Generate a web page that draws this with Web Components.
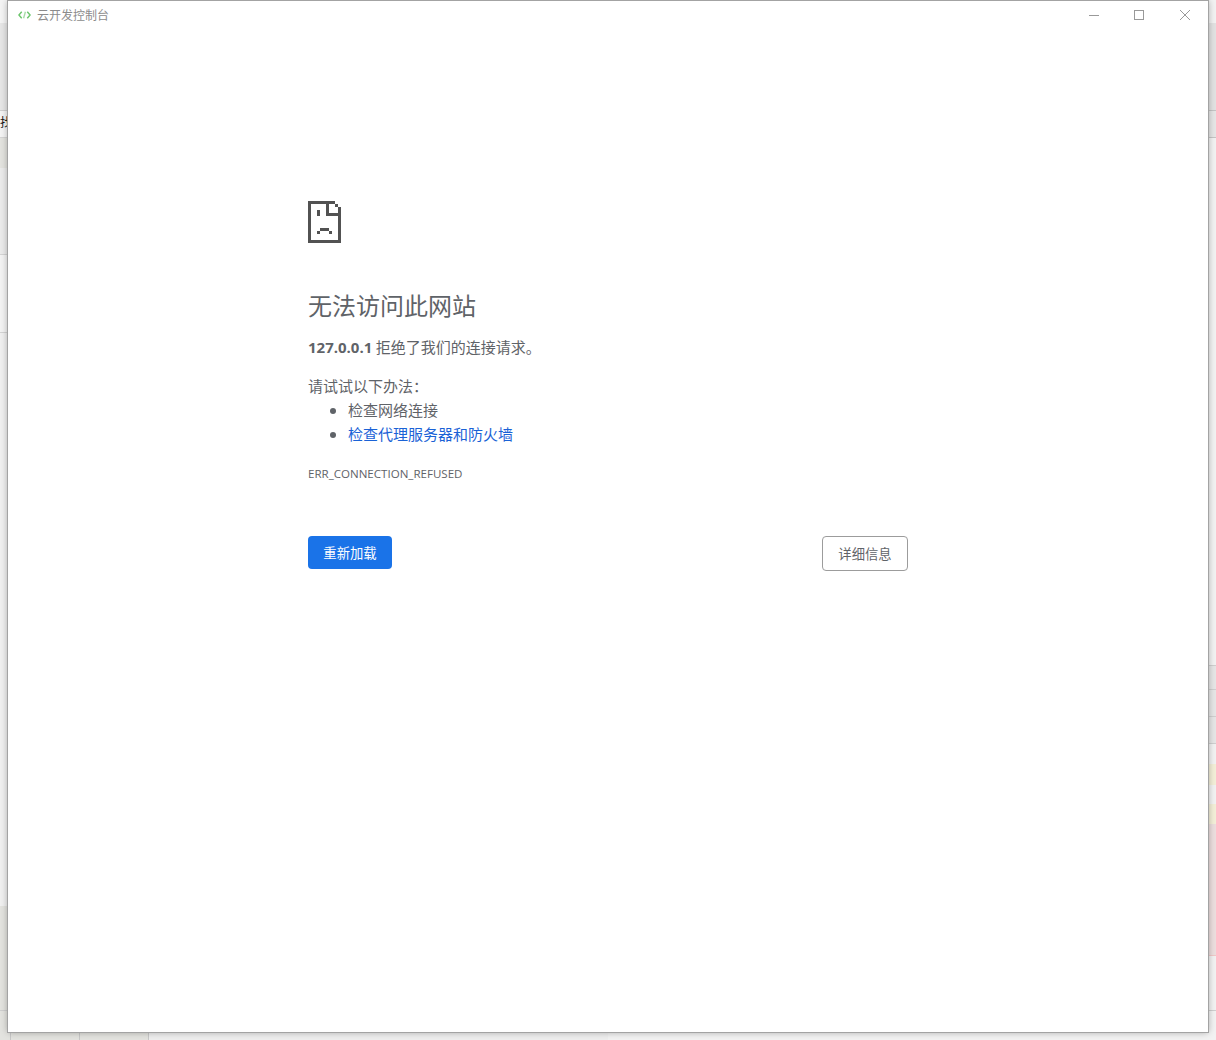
<!DOCTYPE html>
<html lang="zh-CN">
<head>
<meta charset="utf-8">
<title>云开发控制台</title>
<style>
html, body { margin: 0; height: 100%; overflow: hidden; background: #f2f2f2; }
body { font-family: "Noto Sans CJK SC", "Noto Sans", sans-serif; color: #5f6368; }
</style>
</head>
<body>
<desk-backdrop></desk-backdrop>
<app-window heading="云开发控制台">
    <error-page>
        <span slot="host">127.0.0.1</span>
        <span slot="reason">拒绝了我们的连接请求。</span>
        <span slot="code">ERR_CONNECTION_REFUSED</span>
    </error-page>
</app-window>
<script>
// the app behind the window, only its edges show
customElements.define("desk-backdrop", class extends HTMLElement {
    connectedCallback() {
        let row = ([height, color, line, text]) =>
            `<div class="row" style="height:${height}px;background:${color};${line ? "border-bottom:1px solid " + line : ""}">${text || ""}</div>`;
        let left = [
            [23, "#f4f4f4"],
            [87, "#e6e6e6", "#cfcfcf"],
            [26, "#f4f4f4", "#d4d4d4", `<span class="clip">找</span>`],
            [30, "#e3e3df"],
            [86, "#ebebeb", "#d4d4d4"],
            [77, "#f3f3f3", "#d4d4d4"],
            [573, "#f0f0f0"],
            [104, "#e3e3df", "#cfcfcf"]
        ];
        let right = [
            [23, "#f2f2f2"],
            [87, "#e2e2e2", "#c4c4c4"],
            [26, "#e6e6e6", "#c4c4c4"],
            [527, "#f2f2f2", "#cfcfcf"],
            [23, "#e6e6e6", "#cfcfcf"],
            [26, "#e6e6e6", "#cfcfcf"],
            [26, "#e6e6e6", "#cfcfcf"],
            [20, "#f2f2f2"],
            [21, "#f3efd8"],
            [19, "#f2f2f2"],
            [20, "#f3efd8"],
            [131, "#ecdede", "#f0c8c8"],
            [54, "#f2f2f2", "#cfcfcf"],
            [29, "#f2f2f2"]
        ];
        this.attachShadow({ mode: "open" }).innerHTML = `<style>
            :host { display: grid; grid-template-columns: 1fr 1fr; width: 1216px; height: 1040px; overflow: hidden; }
            .row { box-sizing: content-box; overflow: hidden; white-space: nowrap; }
            .clip { display: block; margin: 3px 0 0 0; font: 12px/16px "Noto Sans CJK SC", sans-serif; color: #111; }
            .cells { display: flex; height: 29px; background: #e3e3df; }
            .cell { box-sizing: border-box; height: 100%; border-right: 1px solid #c8c8c8; }
        </style>
        <div>
            ${left.map(row).join("")}
            <div class="cells">
                <div class="cell" style="width:11px"></div>
                <div class="cell" style="width:69px"></div>
                <div class="cell" style="width:69px"></div>
                <div class="cell" style="flex:1;background:#eeeeee;border:0"></div>
            </div>
        </div>
        <div>${right.map(row).join("")}</div>`;
    }
});

customElements.define("app-window", class extends HTMLElement {
    connectedCallback() {
        this.attachShadow({ mode: "open" }).innerHTML = `<style>
            :host { position: absolute; left: 8px; top: 1px; width: 1200px; height: 1031px; display: flex; flex-direction: column; background: #fff;
                box-shadow: 0 0 0 1px #a3a3a3, 0 0 7px rgba(0, 0, 0, .35); }
            header { display: flex; align-items: center; height: 28px; flex: none; padding-left: 10px; font-size: 12px; color: #8c8c8c; }
            .logo { width: 13px; height: 10px; margin-right: 6px; }
            .title { flex: 1; margin-bottom: 2px; }
            .ctrl { width: 46px; height: 28px; display: flex; align-items: center; justify-content: center; }
            .ctrl svg { width: 12px; height: 12px; }
            .ctrl.min { width: 44px; }
            main { flex: 1; display: flex; justify-content: center; }
        </style>
        <header>
            <svg class="logo" viewBox="0 0 14 10" fill="none" stroke="#6cc56c" stroke-width="1.5">
                <path d="M4 1.5 1 5l3 3.5M10 1.5 13 5l-3 3.5"/>
                <path d="M8 1.5 6 8.5" stroke="#a8dca8"/>
            </svg>
            <span class="title">${this.getAttribute("heading")}</span>
            <div class="ctrl min"><svg viewBox="0 0 12 12"><path d="M1 6.5h10" stroke="#999" fill="none"/></svg></div>
            <div class="ctrl"><svg viewBox="0 0 12 12"><rect x="1.5" y="1.5" width="9" height="9" fill="none" stroke="#999"/></svg></div>
            <div class="ctrl"><svg viewBox="0 0 12 12"><path d="M1 1l10 10M11 1 1 11" stroke="#999" fill="none"/></svg></div>
        </header>
        <main><slot></slot></main>`;
    }
});

customElements.define("sad-page-icon", class extends HTMLElement {
    connectedCallback() {
        // pixel art on a 3px grid
        let cells = [
            [0, 0, 9, 1], [0, 13, 11, 1], [0, 0, 1, 14], [10, 2, 1, 12],
            [9, 1, 1, 1], [6, 0, 1, 5], [6, 4, 5, 1],
            [3, 3, 1, 2],
            [4, 9, 3, 1], [3, 10, 1, 1], [7, 10, 1, 1]
        ];
        this.attachShadow({ mode: "open" }).innerHTML = `<style>:host { display: block; width: 33px; height: 42px; } svg { display: block; }</style>
        <svg width="33" height="42" viewBox="0 0 11 14" fill="#525252" shape-rendering="crispEdges">
            ${cells.map(([x, y, w, h]) => `<rect x="${x}" y="${y}" width="${w}" height="${h}"/>`).join("")}
        </svg>`;
    }
});

customElements.define("error-page", class extends HTMLElement {
    connectedCallback() {
        this.attachShadow({ mode: "open" }).innerHTML = `<style>
            :host { display: block; width: 600px; padding-top: 172px; font-size: 15px; line-height: 24px; color: #5f6368; font-family: "Noto Sans CJK SC", "Noto Sans", sans-serif; }
            h1 { margin: 44px 0 0; font-size: 24px; line-height: 36px; font-weight: 400; color: #5f6368; }
            p { margin: 0; }
            .what { margin-top: 12px; }
            .host { font-family: "Open Sans", sans-serif; font-weight: 700; font-size: 15px; }
            .try { margin-top: 15px; }
            ul { margin: 0; padding: 0 0 0 40px; }
            a { color: #1a62d6; text-decoration: none; }
            .code { margin-top: 16px; font-family: "Open Sans", sans-serif; font-size: 11.55px; }
            .buttons { display: flex; justify-content: space-between; align-items: flex-start; margin-top: 50px; }
            button { display: block; box-sizing: border-box; margin: 0; border-radius: 4px; font: 13.33px/16px "Noto Sans CJK SC", sans-serif; }
            .reload { width: 84px; height: 33px; border: 0; background: #1a73e8; color: #fff; }
            .details { width: 86px; height: 35px; border: 1px solid #9c9c9c; background: #fff; color: #5f6368; }
        </style>
        <sad-page-icon></sad-page-icon>
        <h1>无法访问此网站</h1>
        <p class="what"><span class="host"><slot name="host"></slot></span> <slot name="reason"></slot></p>
        <p class="try">请试试以下办法：</p>
        <ul>
            <li>检查网络连接</li>
            <li><a href="#">检查代理服务器和防火墙</a></li>
        </ul>
        <p class="code"><slot name="code"></slot></p>
        <div class="buttons">
            <button class="reload">重新加载</button>
            <button class="details">详细信息</button>
        </div>`;
    }
});
</script>
</body>
</html>
